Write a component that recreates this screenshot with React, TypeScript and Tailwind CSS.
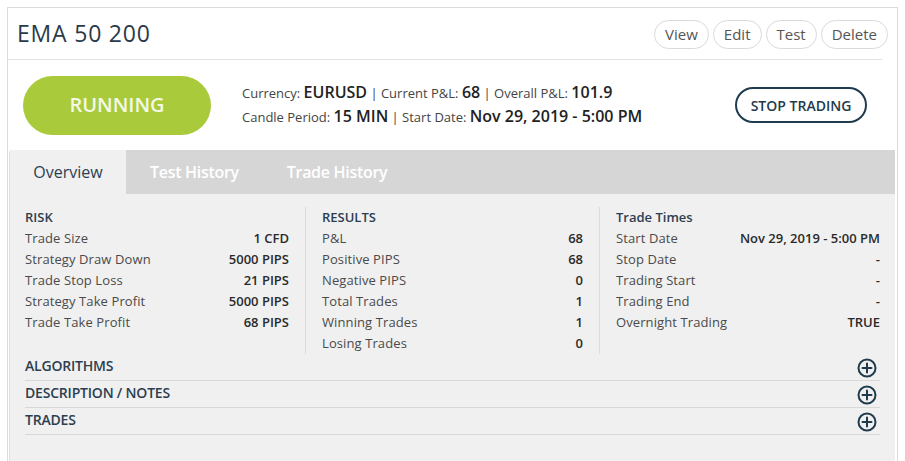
import React from "react";

type Row = { label: string; value: string };

const risk: Row[] = [
  { label: "Trade Size", value: "1 CFD" },
  { label: "Strategy Draw Down", value: "5000 PIPS" },
  { label: "Trade Stop Loss", value: "21 PIPS" },
  { label: "Strategy Take Profit", value: "5000 PIPS" },
  { label: "Trade Take Profit", value: "68 PIPS" },
];

const results: Row[] = [
  { label: "P&L", value: "68" },
  { label: "Positive PIPS", value: "68" },
  { label: "Negative PIPS", value: "0" },
  { label: "Total Trades", value: "1" },
  { label: "Winning Trades", value: "1" },
  { label: "Losing Trades", value: "0" },
];

const times: Row[] = [
  { label: "Start Date", value: "Nov 29, 2019 - 5:00 PM" },
  { label: "Stop Date", value: "-" },
  { label: "Trading Start", value: "-" },
  { label: "Trading End", value: "-" },
  { label: "Overnight Trading", value: "TRUE" },
];

function StatColumn({ title, rows, className }: { title: string; rows: Row[]; className: string }) {
  return (
    <div className={className}>
      <div className="h-[21px] leading-[21px] text-[#2c3e50] font-semibold">{title}</div>
      {rows.map((r) => (
        <div key={r.label} className="h-[21px] leading-[21px] flex justify-between">
          <span className="text-[#4a4a4a] tracking-[0.1px]">{r.label}</span>
          <span className="font-semibold text-[#2a2a2a]">{r.value}</span>
        </div>
      ))}
    </div>
  );
}

function PlusCircle() {
  return (
    <svg width="20" height="20" viewBox="0 0 20 20" fill="none" stroke="#1f3b4d" strokeWidth="2">
      <circle cx="10" cy="10" r="8.5" />
      <path d="M10 5.5v9M5.5 10h9" strokeLinecap="round" />
    </svg>
  );
}

export default function App() {
  const buttons = ["View", "Edit", "Test", "Delete"];
  const sections = ["ALGORITHMS", "DESCRIPTION / NOTES", "TRADES"];

  return (
    <div
      className="w-[905px] h-[461px] overflow-hidden bg-white pt-[7px] pl-[7px] pr-[7px]"
      style={{ fontFamily: '"Open Sans", "Liberation Sans", sans-serif' }}
    >
      <div className="h-full border border-b-0 border-[#dcdcdc] bg-white flex flex-col">
        {/* title + actions */}
        <div className="h-[51px] flex items-center justify-between pl-[9px] pr-[9px]">
          <h1 className="text-[23px] text-[#2b3a48] tracking-[0.8px]">EMA 50 200</h1>
          <div className="flex gap-[4px] pt-[1px]">
            {buttons.map((b) => (
              <button
                key={b}
                className="h-[29px] px-[10px] rounded-full border border-[#dadada] bg-white text-[15px] text-[#555]"
              >
                {b}
              </button>
            ))}
          </div>
        </div>
        <div className="h-px bg-[#e2e2e2] mr-[15px]" />

        {/* status strip */}
        <div className="h-[90px] flex items-center pl-[15px] pr-[30px]">
          <div className="w-[188px] h-[59px] rounded-full bg-[#a9cb3b] flex items-center justify-center text-[20px] font-semibold text-[#f4f8e6]">
            RUNNING
          </div>
          <div className="ml-[31px] flex-1 text-[13px] text-[#444] leading-[23px]">
            <div>
              Currency: <span className="text-[16px] font-semibold text-[#222]">EURUSD</span> | Current P&amp;L:{" "}
              <span className="text-[16px] font-semibold text-[#222]">68</span> | Overall P&amp;L:{" "}
              <span className="text-[16px] font-semibold text-[#222]">101.9</span>
            </div>
            <div>
              Candle Period: <span className="text-[16px] font-semibold text-[#222]">15 MIN</span> | Start Date:{" "}
              <span className="text-[16px] font-semibold text-[#222]">Nov 29, 2019 - 5:00 PM</span>
            </div>
          </div>
          <button className="h-[36px] w-[132px] rounded-full border-2 border-[#1f3b4d] text-[14px] font-semibold text-[#1f3b4d]">
            STOP TRADING
          </button>
        </div>

        {/* tabbed panel */}
        <div className="flex-1 ml-px mr-[2px] bg-[#f0f0f0] rounded-tl-[3px] border-l border-[#e0e0e0]">
          <div className="h-[44px] bg-[#d6d6d6] flex text-[16px]">
            <div className="w-[116px] bg-[#f0f0f0] flex items-center justify-center text-[#2c3e50]">
              Overview
            </div>
            <div className="px-6 flex items-center font-semibold text-white tracking-[-0.3px]">Test History</div>
            <div className="px-6 flex items-center font-semibold text-white tracking-[-0.3px]">Trade History</div>
          </div>

          <div className="pl-[15px] pr-[15px] text-[13px]">
            <div className="flex pt-[13px]">
              <StatColumn title="RISK" rows={risk} className="w-[264px]" />
              <div className="w-px bg-[#dcdcdc] mx-[16px]" />
              <StatColumn title="RESULTS" rows={results} className="w-[261px]" />
              <div className="w-px bg-[#dcdcdc] mx-[16px]" />
              <StatColumn title="Trade Times" rows={times} className="flex-1" />
            </div>

            {sections.map((s) => (
              <div
                key={s}
                className="h-[27px] border-b border-[#d8d8d8] flex items-center justify-between"
              >
                <span className="text-[14px] font-semibold text-[#2c3e50] -mt-[4px] tracking-[-0.2px]">{s}</span>
                <span className="pr-[3px] pt-[2px]">
                  <PlusCircle />
                </span>
              </div>
            ))}
          </div>
        </div>
      </div>
    </div>
  );
}
